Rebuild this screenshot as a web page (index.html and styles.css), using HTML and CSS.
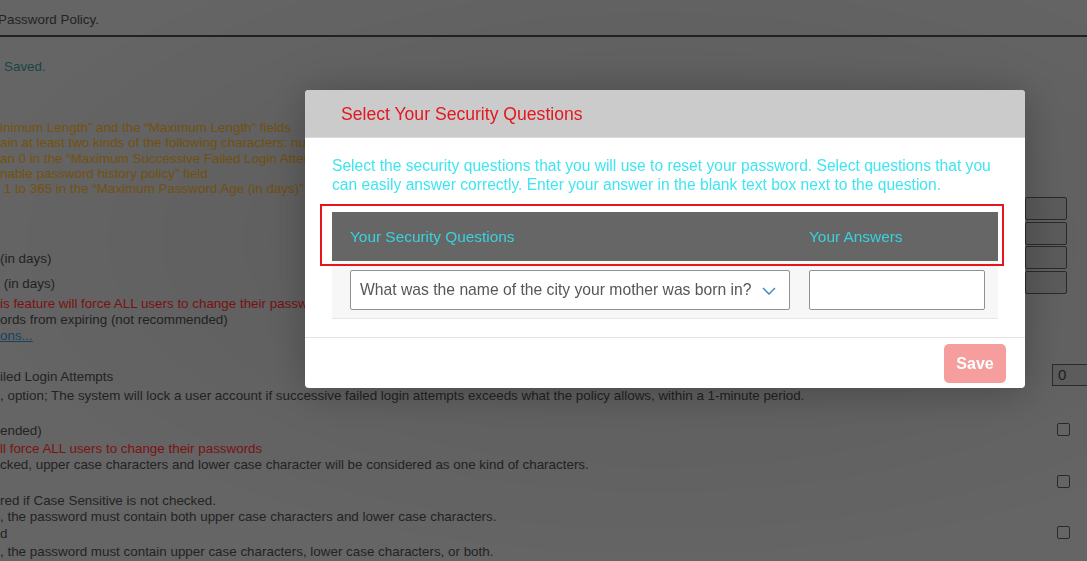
FILE: index.html
```html
<!DOCTYPE html>
<html lang="en">
<head>
<meta charset="utf-8">
<title>Password Policy</title>
<link rel="stylesheet" href="styles.css">
</head>
<body>
<div class="page">
  <div class="titlebar"><span class="cut">Password Policy.</span></div>
  <p class="saved">Saved.</p>
  <div class="warnings">
    <div>inimum Length” and the “Maximum Length” fields</div>
    <div>ain at least two kinds of the following characters: numbers, letters, and special characters</div>
    <div>an 0 in the “Maximum Successive Failed Login Attempts” field</div>
    <div>nable password history policy” field</div>
    <div>&nbsp;1 to 365 in the “Maximum Password Age (in days)” field</div>
  </div>
  <div class="crow"><span></span><span class="tbox"></span></div>
  <div class="crow"><span></span><span class="tbox"></span></div>
  <div class="crow"><span>(in days)</span><span class="tbox"></span></div>
  <div class="crow"><span>&nbsp;(in days)</span><span class="tbox"></span></div>
  <div class="lines l1">
    <div class="red">is feature will force ALL users to change their passwords</div>
    <div>ords from expiring (not recommended)</div>
    <div><span class="link">ons...</span></div>
  </div>
  <div class="crow r-attempts"><span>iled Login Attempts</span><span class="numbox">0</span></div>
  <div class="lines l2"><div>, option; The system will lock a user account if successive failed login attempts exceeds what the policy allows, within a 1-minute period.</div></div>
  <div class="crow r-chk1"><span>ended)</span><span class="chk"></span></div>
  <div class="lines l2b">
    <div class="red">ll force ALL users to change their passwords</div>
    <div>cked, upper case characters and lower case character will be considered as one kind of characters.</div>
  </div>
  <div class="crow r-chk2"><span></span><span class="chk"></span></div>
  <div class="lines l3">
    <div>red if Case Sensitive is not checked.</div>
    <div>, the password must contain both upper case characters and lower case characters.</div>
  </div>
  <div class="crow r-chk3"><span>d</span><span class="chk"></span></div>
  <div class="lines l4"><div>, the password must contain upper case characters, lower case characters, or both.</div></div>
</div>

<div class="overlay"></div>

<div class="modal">
  <div class="modal-head">Select Your Security Questions</div>
  <div class="modal-body">
    <p class="intro">Select the security questions that you will use to reset your password. Select questions that you can easily answer correctly. Enter your answer in the blank text box next to the question.</p>
    <div class="qtable">
      <div class="qhead">
        <div>Your Security Questions</div>
        <div>Your Answers</div>
      </div>
      <div class="qrow">
        <div class="select">
          <span>What was the name of the city your mother was born in?</span>
          <svg class="chev" width="14" height="8" viewBox="0 0 14 8"><path d="M1 1 L7 7 L13 1" fill="none" stroke="#3d80c6" stroke-width="1.4"/></svg>
        </div>
        <div class="answer"></div>
      </div>
    </div>
    <div class="mark"></div>
  </div>
  <div class="modal-foot">
    <button class="save">Save</button>
  </div>
</div>
</body>
</html>
```

FILE: styles.css
```css
html, body {
  margin: 0;
  padding: 0;
  width: 1087px;
  height: 561px;
  overflow: hidden;
  background: #646464;
}

.page {
  font-family: "Liberation Sans", Arial, sans-serif;
  font-size: 13.4px;
  color: #232323;
  white-space: nowrap;
  background: #656565;
  height: 561px;
}

.titlebar {
  height: 23px;
  padding-top: 12px;
  line-height: 16px;
  border-bottom: 2px solid #222;
}
.cut { margin-left: -2px; }

.saved {
  margin: 22px 0 0 4px;
  line-height: 16px;
  color: #1b4447;
}

.warnings {
  margin-top: 45px;
  line-height: 15.3px;
  color: #76530f;
}

.crow {
  display: flex;
  align-items: center;
  height: 24.5px;
}
.crow > span:first-child {
  flex: 1;
  line-height: 16px;
  padding-top: 3px;
}

.tbox {
  width: 40px;
  height: 21px;
  border: 1px solid #2c2c2c;
  border-radius: 2px;
  margin-right: 20px;
  background: #5f5f5f;
}

.lines { line-height: 16px; }
.red { color: #7c1313; }
.link { color: #1a4259; text-decoration: underline; }

.l1 { margin-top: 2px; }
.r-attempts { height: 24px; margin-top: 19px; }
.r-attempts > span:first-child { padding-top: 3px; }
.numbox {
  width: 44px;
  height: 20px;
  border: 1px solid #2c2c2c;
  margin-right: -16px;
  padding-left: 5px;
  font-size: 15px;
  line-height: 20px;
  color: #222;
  background: #5f5f5f;
}
.l2 { margin-top: 1px; }
.r-chk1 { height: 16px; margin-top: 17px; }
.l2b { margin-top: 4px; }
.r-chk2 { height: 16px; margin-top: 0; }
.l3 { margin-top: 4px; }
.r-chk3 { height: 16px; margin-top: -1px; }
.l4 { margin-top: 4px; }
.r-chk1 > span:first-child,
.r-chk2 > span:first-child,
.r-chk3 > span:first-child { padding-top: 4px; }

.chk {
  width: 11px;
  height: 11px;
  border: 1px solid #2a2a2a;
  border-radius: 2px;
  margin-right: 17px;
}

.overlay {
  position: fixed;
  inset: 0;
  background: radial-gradient(ellipse 700px 320px at 660px 240px, rgba(0,0,0,0.10), rgba(0,0,0,0) 100%);
}

.modal {
  position: fixed;
  left: 305px;
  top: 90px;
  width: 720px;
  height: 298px;
  background: #fff;
  border-radius: 4px;
  overflow: hidden;
  font-family: "Liberation Sans", Arial, sans-serif;
  display: flex;
  flex-direction: column;
  box-shadow: 0 4px 40px rgba(0,0,0,0.25);
}

.modal-head {
  height: 47px;
  flex: none;
  background: #cbcbcb;
  border-bottom: 1px solid #dadada;
  padding-left: 36px;
  line-height: 49px;
  font-size: 17.6px;
  color: #e3171f;
}

.modal-body {
  position: relative;
  height: 199px;
  flex: none;
  padding: 0 27px;
  border-bottom: 1px solid #e3e3e3;
}

.intro {
  margin: 18px 0 0;
  font-size: 15.6px;
  line-height: 19px;
  color: #3fe5f1;
}

.qtable { margin-top: 18px; }

.qhead {
  display: grid;
  grid-template-columns: 477px 1fr;
  height: 49px;
  line-height: 49px;
  background: #666;
  font-size: 15.4px;
  color: #39d2dc;
}
.qhead > div:first-child { padding-left: 18px; }

.qrow {
  display: grid;
  grid-template-columns: 477px 1fr;
  align-items: start;
  height: 48px;
  padding-top: 9px;
  background: #f7f7f7;
  border-bottom: 1px solid #e6e6e6;
  padding-left: 18px;
}

.select {
  border: 1px solid #8a939c;
  border-radius: 2px;
  background: #fff;
  display: flex;
  align-items: center;
  justify-content: space-between;
  padding: 0 13px 0 9px;
  box-sizing: border-box;
  width: 440px;
  height: 40px;
  font-size: 15.7px;
  color: #575757;
}
.chev { margin-top: 2px; }

.answer {
  width: 174px;
  height: 38px;
  border: 1px solid #8a939c;
  border-radius: 2px;
  background: #fff;
  margin-left: -18px;
}

.mark {
  position: absolute;
  left: 15px;
  top: 66px;
  width: 680px;
  height: 58px;
  border: 2px solid #e5141d;
}

.modal-foot {
  flex: 1;
  display: flex;
  justify-content: flex-end;
  align-items: flex-start;
  padding: 6px 19px 0 0;
}

.save {
  width: 62px;
  height: 39px;
  border: none;
  border-radius: 5px;
  background: #f59e9d;
  color: #fff;
  font-family: "Liberation Sans", Arial, sans-serif;
  font-weight: bold;
  font-size: 16px;
}
```
